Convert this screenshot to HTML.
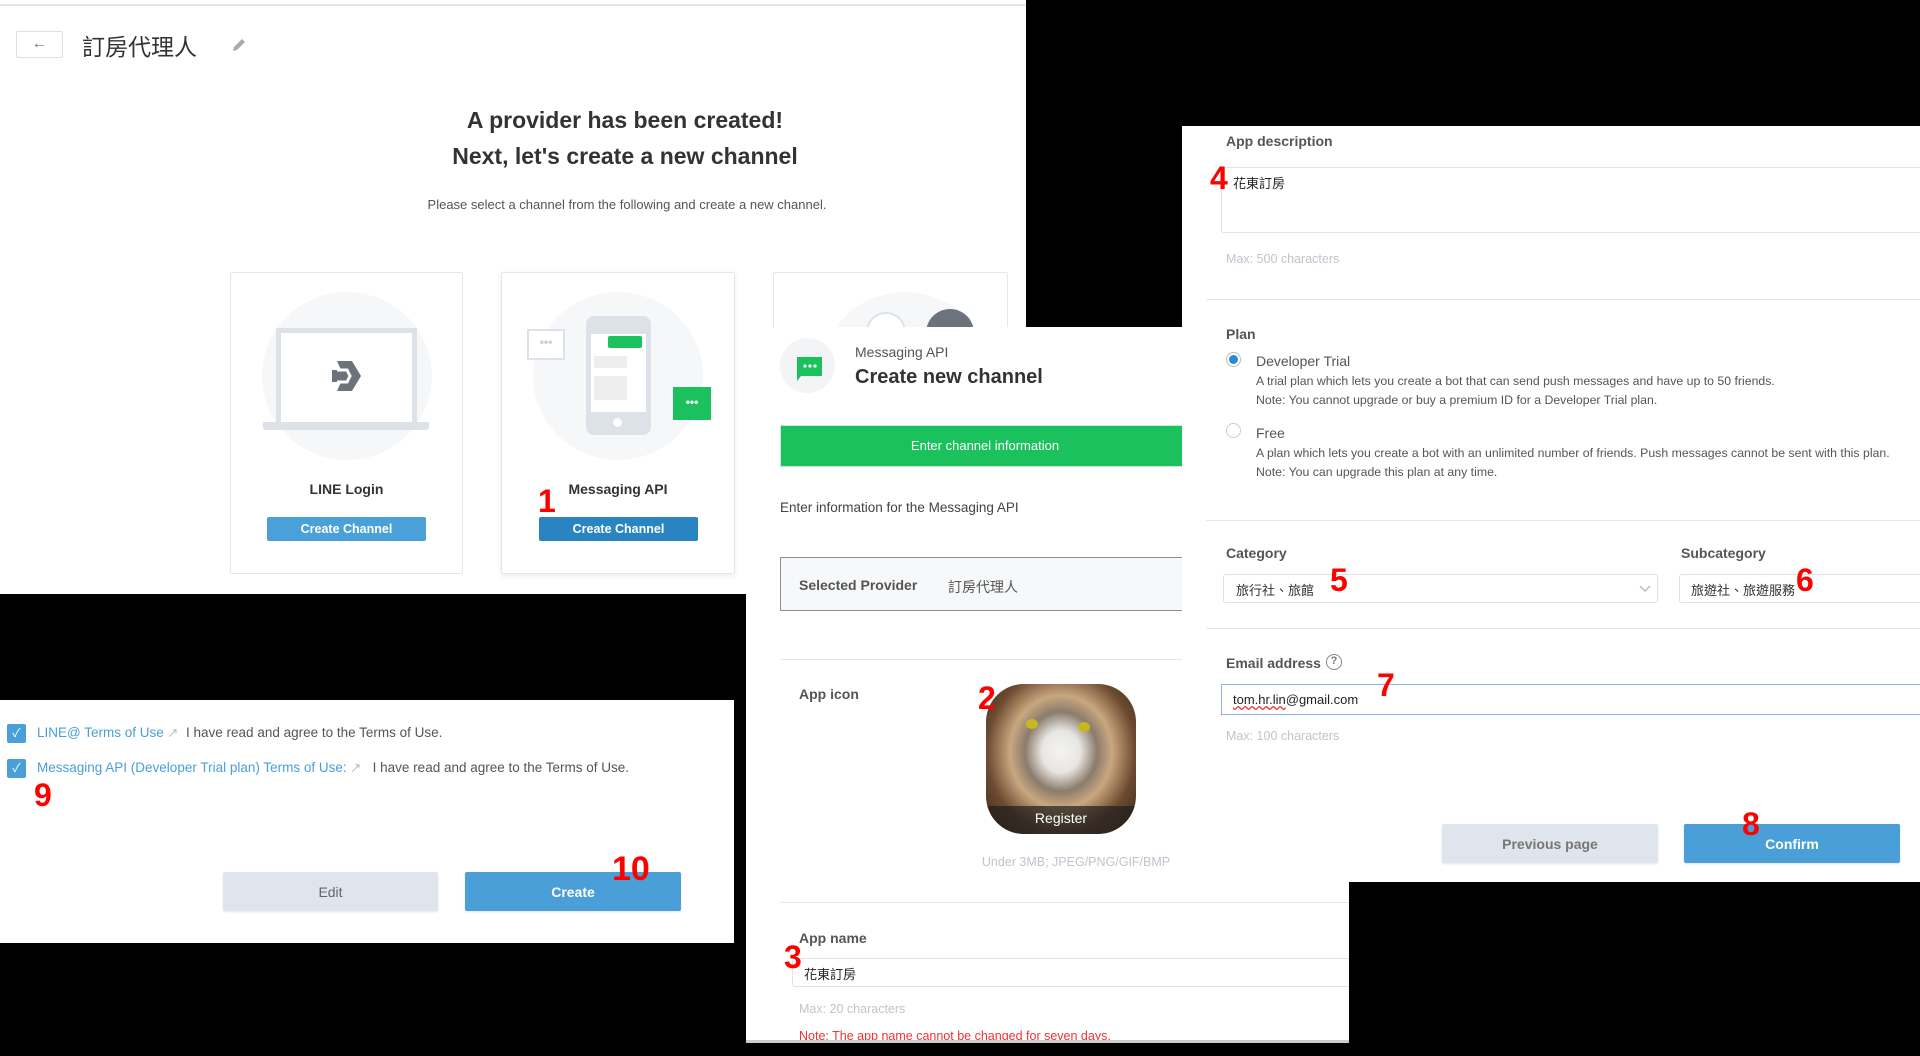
<!DOCTYPE html>
<html><head><meta charset="utf-8">
<style>
*{margin:0;padding:0;box-sizing:border-box}
body{width:1920px;height:1056px;background:#000;position:relative;overflow:hidden;font-family:"Liberation Sans","Noto Sans CJK TC",sans-serif;color:#333}
.a{position:absolute}
.p{position:absolute;background:#fff;overflow:hidden}
.t{position:absolute;white-space:nowrap}
.red{position:absolute;color:#f00;font-weight:bold;font-size:34px;line-height:1;font-family:"Liberation Sans",sans-serif}
.lbl{position:absolute;font-weight:bold;font-size:14px;color:#555;white-space:nowrap}
.hint{position:absolute;font-size:12.5px;color:#c0c4cc;white-space:nowrap}
.hr{position:absolute;height:1px;background:#e3e6ea}
.inp{position:absolute;border:1px solid #dfe2e6;border-radius:3px;background:#fff}
.btn{position:absolute;color:#fff;font-weight:bold;font-size:13.5px;display:flex;align-items:center;justify-content:center;border-radius:2px}
</style></head><body>

<!-- Panel A -->
<div class="p" style="left:0;top:0;width:1026px;height:594px">
  <div class="a" style="left:0;top:4px;width:1026px;height:2px;background:#e6e6e6"></div>
  <div class="a" style="left:16px;top:31px;width:47px;height:27px;border:1px solid #dcdfe3;border-radius:2px;font-size:16px;color:#777;text-align:center;line-height:24px">&#8592;</div>
  <div class="t" style="left:82px;top:28px;font-size:23px;color:#333">訂房代理人</div>
  <svg class="a" style="left:230px;top:36px" width="18" height="18" viewBox="0 0 18 18"><path d="M3 15 L4 11 L12 3 L15 6 L7 14 Z" fill="#aaa"/></svg>
  <div class="t" style="left:0;width:1250px;text-align:center;top:107px;font-size:23px;font-weight:bold;color:#333">A provider has been created!</div>
  <div class="t" style="left:0;width:1250px;text-align:center;top:143px;font-size:23px;font-weight:bold;color:#333">Next, let's create a new channel</div>
  <div class="t" style="left:0;width:1254px;text-align:center;top:197px;font-size:13px;color:#555">Please select a channel from the following and create a new channel.</div>

  <!-- card1 -->
  <div class="a" style="left:230px;top:272px;width:233px;height:302px;border:1px solid #e3e6ea;border-radius:2px"></div>
  <div class="a" style="left:262px;top:292px;width:170px;height:168px;border-radius:50%;background:#f6f7f9"></div>
  <div class="a" style="left:276px;top:328px;width:141px;height:95px;border:5px solid #dde2e9;border-bottom:none;background:#fff"></div>
  <div class="a" style="left:263px;top:422px;width:166px;height:8px;background:#dde2e9;border-radius:0 0 3px 3px"></div>
  <svg class="a" style="left:328px;top:358px" width="36" height="36" viewBox="0 0 36 36"><path d="M9 3 H24 L33 18 L24 33 H9 L13 24 H4 V12 H13 Z" fill="#6c737c"/><path d="M9 12 H19 L22 18 L19 24 H9" fill="none" stroke="#fff" stroke-width="3"/></svg>
  <div class="t" style="left:230px;width:233px;text-align:center;top:481px;font-size:14px;font-weight:bold;color:#333">LINE Login</div>
  <div class="btn" style="left:267px;top:517px;width:159px;height:24px;background:#4aa0d8;font-size:12.5px">Create Channel</div>

  <!-- card2 -->
  <div class="a" style="left:501px;top:272px;width:234px;height:302px;border:1px solid #e3e6ea;border-radius:2px;box-shadow:0 2px 6px rgba(0,0,0,.08)"></div>
  <div class="a" style="left:533px;top:292px;width:170px;height:168px;border-radius:50%;background:#f6f7f9"></div>
  <div class="a" style="left:586px;top:316px;width:65px;height:119px;border-radius:8px;background:#dde2e9"></div>
  <div class="a" style="left:591px;top:334px;width:55px;height:78px;background:#fff"></div>
  <div class="a" style="left:608px;top:336px;width:34px;height:12px;background:#1bc15d;border-radius:2px"></div>
  <div class="a" style="left:594px;top:356px;width:33px;height:12px;background:#eee"></div>
  <div class="a" style="left:594px;top:376px;width:33px;height:24px;background:#eee"></div>
  <div class="a" style="left:613px;top:418px;width:9px;height:9px;border-radius:50%;background:#fff"></div>
  <div class="a" style="left:527px;top:329px;width:38px;height:31px;border:2px solid #dde2e9;background:#fff;color:#ccd;font-size:12px;text-align:center;line-height:22px;font-weight:bold">•••</div>
  <div class="a" style="left:673px;top:387px;width:38px;height:33px;background:#1bc15d;color:#fff;font-size:12px;text-align:center;line-height:30px;font-weight:bold">•••</div>
  <div class="t" style="left:501px;width:234px;text-align:center;top:481px;font-size:14px;font-weight:bold;color:#333">Messaging API</div>
  <div class="btn" style="left:539px;top:517px;width:159px;height:24px;background:#2a84c1;font-size:12.5px">Create Channel</div>
  <div class="red" style="left:538px;top:485px;font-size:32px">1</div>

  <!-- card3 -->
  <div class="a" style="left:773px;top:272px;width:235px;height:320px;border:1px solid #e3e6ea;border-radius:2px"></div>
  <div class="a" style="left:820px;top:292px;width:170px;height:168px;border-radius:50%;background:#f6f7f9"></div>
  <div class="a" style="left:866px;top:312px;width:40px;height:40px;border-radius:50%;border:2px solid #dde2e9;background:#fff"></div>
  <div class="a" style="left:926px;top:309px;width:48px;height:48px;border-radius:50%;background:#6c737c"></div>
</div>

<!-- Panel D -->
<div class="p" style="left:0;top:700px;width:734px;height:243px">
  <div class="a" style="left:7px;top:24px;width:19px;height:19px;background:#4a9fd8;border-radius:2px;color:#fff;font-size:12px;text-align:center;line-height:19px">✓</div>
  <div class="t" style="left:37px;top:25px;font-size:13.5px;color:#4a9fd8">LINE@ Terms of Use <span style="color:#aaa;font-size:11px">&#8599;</span> <span style="color:#555">&nbsp;I have read and agree to the Terms of Use.</span></div>
  <div class="a" style="left:7px;top:59px;width:19px;height:19px;background:#4a9fd8;border-radius:2px;color:#fff;font-size:12px;text-align:center;line-height:19px">✓</div>
  <div class="t" style="left:37px;top:60px;font-size:13.5px;color:#4a9fd8">Messaging API (Developer Trial plan) Terms of Use: <span style="color:#aaa;font-size:11px">&#8599;</span> <span style="color:#555">&nbsp;&nbsp;I have read and agree to the Terms of Use.</span></div>
  <div class="red" style="left:34px;top:79px;font-size:32px">9</div>
  <div class="btn" style="left:223px;top:172px;width:215px;height:39px;background:#dfe5ec;color:#666;font-weight:normal;font-size:14px;box-shadow:0 1px 2px rgba(0,0,0,.1)">Edit</div>
  <div class="btn" style="left:465px;top:172px;width:216px;height:39px;background:#4a9fd8;font-size:14px;box-shadow:0 1px 2px rgba(0,0,0,.1)">Create</div>
  <div class="red" style="left:612px;top:152px;font-size:34px">10</div>
</div>

<!-- Panel B -->
<div class="p" style="left:746px;top:327px;width:603px;height:716px">
  <div class="a" style="left:34px;top:11px;width:55px;height:55px;border-radius:50%;background:#f3f4f6"></div>
  <svg class="a" style="left:49px;top:28px" width="28" height="28" viewBox="0 0 28 28"><path d="M2 2 H27 V21 H6 L2 26 Z" fill="#1bc15d"/><circle cx="10" cy="11" r="1.6" fill="#fff"/><circle cx="15" cy="11" r="1.6" fill="#fff"/><circle cx="20" cy="11" r="1.6" fill="#fff"/></svg>
  <div class="t" style="left:109px;top:17px;font-size:14px;color:#555">Messaging API</div>
  <div class="t" style="left:109px;top:39px;font-size:20px;font-weight:bold;color:#333">Create new channel</div>
  <div class="a" style="left:34px;top:98px;width:600px;height:42px;background:#1bc15d;border:1px solid #d0e8d8"></div>
  <div class="t" style="left:34px;width:410px;text-align:center;top:111px;font-size:13px;color:#fff">Enter channel information</div>
  <div class="t" style="left:34px;top:173px;font-size:13.5px;color:#444">Enter information for the Messaging API</div>
  <div class="a" style="left:34px;top:230px;width:600px;height:54px;border:1px solid #8a909a;background:#f7f8f9"></div>
  <div class="t" style="left:53px;top:250px;font-size:14px;font-weight:bold;color:#555">Selected Provider</div>
  <div class="t" style="left:202px;top:250px;font-size:14px;color:#555">訂房代理人</div>
  <div class="hr" style="left:34px;top:332px;width:600px"></div>
  <div class="lbl" style="left:53px;top:359px">App icon</div>
  <div class="a" style="left:240px;top:357px;width:150px;height:150px;border-radius:38px;overflow:hidden;background:radial-gradient(ellipse at 50% 45%,#f4f4f4 0,#e8e6e2 18%,#8a7c6c 34%,#c9a77f 48%,#6b4a30 70%,#3a2618 100%)">
    <div class="a" style="left:40px;top:35px;width:12px;height:10px;border-radius:50%;background:#c8b820"></div>
    <div class="a" style="left:92px;top:38px;width:12px;height:10px;border-radius:50%;background:#c8b820"></div>
    <div class="a" style="left:0;bottom:0;width:150px;height:28px;background:rgba(30,30,30,.7);color:#fff;font-size:14px;text-align:center;line-height:24px">Register</div>
  </div>
  <div class="red" style="left:232px;top:355px;font-size:32px">2</div>
  <div class="hint" style="left:210px;width:240px;text-align:center;top:528px;font-size:12.5px">Under 3MB; JPEG/PNG/GIF/BMP</div>
  <div class="hr" style="left:34px;top:575px;width:600px"></div>
  <div class="lbl" style="left:53px;top:603px">App name</div>
  <div class="inp" style="left:46px;top:631px;width:570px;height:29px"></div>
  <div class="t" style="left:58px;top:637px;font-size:13px;color:#222">花東訂房</div>
  <div class="red" style="left:38px;top:614px;font-size:32px">3</div>
  <div class="hint" style="left:53px;top:675px">Max: 20 characters</div>
  <div class="t" style="left:53px;top:702px;font-size:12.5px;color:#e33">Note: The app name cannot be changed for seven days.</div>
  <div class="a" style="left:0;top:713px;width:603px;height:3px;background:#ccc"></div>
</div>

<!-- Panel C -->
<div class="p" style="left:1182px;top:126px;width:738px;height:756px">
  <div class="lbl" style="left:44px;top:7px">App description</div>
  <div class="inp" style="left:39px;top:41px;width:720px;height:66px"></div>
  <div class="t" style="left:51px;top:47px;font-size:13px;color:#222">花東訂房</div>
  <div class="red" style="left:28px;top:36px;font-size:32px">4</div>
  <div class="hint" style="left:44px;top:126px">Max: 500 characters</div>
  <div class="hr" style="left:24px;top:173px;width:720px"></div>
  <div class="lbl" style="left:44px;top:200px">Plan</div>
  <div class="a" style="left:44px;top:226px;width:15px;height:15px;border-radius:50%;border:1px solid #bbb;background:#fff"><div class="a" style="left:2px;top:2px;width:9px;height:9px;border-radius:50%;background:#2a8ad8"></div></div>
  <div class="t" style="left:74px;top:227px;font-size:14px;color:#555">Developer Trial</div>
  <div class="t" style="left:74px;top:248px;font-size:12.3px;color:#555">A trial plan which lets you create a bot that can send push messages and have up to 50 friends.</div>
  <div class="t" style="left:74px;top:267px;font-size:12.3px;color:#555">Note: You cannot upgrade or buy a premium ID for a Developer Trial plan.</div>
  <div class="a" style="left:44px;top:297px;width:15px;height:15px;border-radius:50%;border:1px solid #ccc;background:#fff"></div>
  <div class="t" style="left:74px;top:299px;font-size:14px;color:#555">Free</div>
  <div class="t" style="left:74px;top:320px;font-size:12.3px;color:#555">A plan which lets you create a bot with an unlimited number of friends. Push messages cannot be sent with this plan.</div>
  <div class="t" style="left:74px;top:339px;font-size:12.3px;color:#555">Note: You can upgrade this plan at any time.</div>
  <div class="hr" style="left:24px;top:394px;width:720px"></div>
  <div class="lbl" style="left:44px;top:419px">Category</div>
  <div class="lbl" style="left:499px;top:419px">Subcategory</div>
  <div class="inp" style="left:41px;top:448px;width:435px;height:29px"></div>
  <div class="t" style="left:54px;top:454px;font-size:13px;color:#333">旅行社、旅館</div>
  <svg class="a" style="left:456px;top:455px" width="14" height="14" viewBox="0 0 14 14"><path d="M2 5 L7 10 L12 5" fill="none" stroke="#bbb" stroke-width="1.5"/></svg>
  <div class="red" style="left:148px;top:438px;font-size:32px">5</div>
  <div class="inp" style="left:497px;top:448px;width:260px;height:29px"></div>
  <div class="t" style="left:509px;top:454px;font-size:13px;color:#333">旅遊社、旅遊服務</div>
  <div class="red" style="left:614px;top:438px;font-size:32px">6</div>
  <div class="hr" style="left:24px;top:502px;width:720px"></div>
  <div class="lbl" style="left:44px;top:529px">Email address</div>
  <div class="a" style="left:144px;top:528px;width:16px;height:16px;border-radius:50%;border:1.5px solid #888;font-size:11px;text-align:center;line-height:13px;color:#777;font-weight:bold">?</div>
  <div class="a" style="left:39px;top:558px;width:720px;height:31px;border:1px solid #8ab4f0;background:#fff"></div>
  <div class="t" style="left:51px;top:566px;font-size:13px;color:#222"><span style="text-decoration:underline wavy #e33;text-decoration-skip-ink:none">tom.hr.lin</span>@gmail.com</div>
  <div class="red" style="left:195px;top:543px;font-size:32px">7</div>
  <div class="hint" style="left:44px;top:603px">Max: 100 characters</div>
  <div class="btn" style="left:260px;top:698px;width:216px;height:39px;background:#dfe5ec;color:#777;font-size:14px;box-shadow:0 1px 2px rgba(0,0,0,.1)">Previous page</div>
  <div class="btn" style="left:502px;top:698px;width:216px;height:39px;background:#4a9fd8;font-size:14px;box-shadow:0 1px 2px rgba(0,0,0,.1)">Confirm</div>
  <div class="red" style="left:560px;top:682px;font-size:32px">8</div>
</div>

</body></html>
